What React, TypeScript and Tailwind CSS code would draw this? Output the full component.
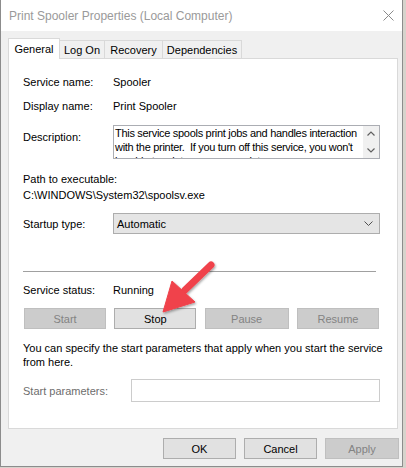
import React from 'react'

const font = { fontFamily: '"Liberation Sans", Arial, sans-serif' }

function Btn({ label, disabled, w = 'w-[82px]' }: { label: string; disabled?: boolean; w?: string }) {
  return (
    <div
      className={`${w} h-[21px] flex items-center justify-center border ${
        disabled ? 'bg-[#cccccc] border-[#bfbfbf] text-[#838383]' : 'bg-[#e1e1e1] border-[#adadad] text-black'
      }`}
    >
      {label}
    </div>
  )
}

function Row({ label, children, className = '' }: { label: string; children?: React.ReactNode; className?: string }) {
  return (
    <div className={`flex items-center h-4 ${className}`}>
      <div className="w-[90px]">{label}</div>
      <div>{children}</div>
    </div>
  )
}

export default function App() {
  return (
    <div className="w-[406px] h-[468px] bg-[#d6d3cc] text-[11px] leading-4 text-black overflow-hidden" style={font}>
      <div className="relative w-[403px] h-[467px] bg-[#f0f0f0] border-l border-r border-b border-[#8c8c8c] flex flex-col">
        {/* Title bar */}
        <div className="h-[31px] bg-white flex items-center justify-between pl-[8px] pr-[8px] shrink-0">
          <span className="text-[12px] text-[#9a9a9a]">Print Spooler Properties (Local Computer)</span>
          <svg width="11" height="11" viewBox="0 0 11 11">
            <path d="M0.5 0.5 L10.5 10.5 M10.5 0.5 L0.5 10.5" stroke="#8a8a8a" strokeWidth="1" />
          </svg>
        </div>

        {/* Tabs */}
        <div className="flex items-end h-[20px] mt-[7px] pl-[7px] shrink-0">
          <div className="h-[21px] w-[52px] bg-white border border-b-0 border-[#d9d9d9] flex items-start justify-center pt-[2px] relative z-10 mb-[-1px]">
            General
          </div>
          <div className="h-[18px] w-[45px] bg-[#f0f0f0] border border-l-0 border-b-0 border-[#d9d9d9] flex items-center justify-center">
            Log On
          </div>
          <div className="h-[18px] w-[58px] bg-[#f0f0f0] border border-l-0 border-b-0 border-[#d9d9d9] flex items-center justify-center">
            Recovery
          </div>
          <div className="h-[18px] w-[79px] bg-[#f0f0f0] border border-l-0 border-b-0 border-[#d9d9d9] flex items-center justify-center">
            Dependencies
          </div>
        </div>

        {/* Panel */}
        <div className="ml-[7px] w-[390px] h-[371px] bg-white border border-[#d9d9d9] pl-[14px] pt-[15px] flex flex-col shrink-0">
          <Row label="Service name:">Spooler</Row>
          <Row label="Display name:" className="mt-[8px]">Print Spooler</Row>

          <div className="flex mt-[11px] h-[34px]">
            <div className="w-[90px] pt-[4px]">Description:</div>
            <div className="w-[267px] h-[34px] border border-[#abadb3] flex">
              <div className="flex-1 overflow-hidden pl-[1px] leading-[14px] whitespace-nowrap tracking-[-0.3px]">
                This service spools print jobs and handles interaction
                <br />
                with the printer.&nbsp; If you turn off this service, you won't
                <br />
                be able to print or see your printers.
              </div>
              <div className="w-[16px] bg-[#f0f0f0] flex flex-col items-center justify-between py-[5px]">
                <svg width="8" height="5" viewBox="0 0 8 5">
                  <path d="M0.5 4.5 L4 1 L7.5 4.5" stroke="#606060" strokeWidth="1.2" fill="none" />
                </svg>
                <svg width="8" height="5" viewBox="0 0 8 5">
                  <path d="M0.5 0.5 L4 4 L7.5 0.5" stroke="#606060" strokeWidth="1.2" fill="none" />
                </svg>
              </div>
            </div>
          </div>

          <div className="mt-[12px] h-4 flex items-center">Path to executable:</div>
          <div className="h-4 flex items-center">C:\WINDOWS\System32\spoolsv.exe</div>

          <div className="flex items-center mt-[10px] h-[21px]">
            <div className="w-[90px]">Startup type:</div>
            <div className="w-[267px] h-[21px] bg-[#e5e5e5] border border-[#adadad] flex items-center justify-between pl-[3px] pr-[6px]">
              <span>Automatic</span>
              <svg width="9" height="5" viewBox="0 0 9 5">
                <path d="M0.5 0.5 L4.5 4.5 L8.5 0.5" stroke="#505050" strokeWidth="1" fill="none" />
              </svg>
            </div>
          </div>

          <div className="mt-[37px] w-[353px] h-px bg-[#a0a0a0]" />

          <Row label="Service status:" className="mt-[10px]">Running</Row>

          <div className="mt-[10px] w-[356px] flex justify-between pl-[1px]">
            <Btn label="Start" disabled />
            <Btn label="Stop" />
            <Btn label="Pause" disabled w="w-[84px]" />
            <Btn label="Resume" disabled />
          </div>

          <div className="mt-[12px] leading-[14px] w-[360px]">
            You can specify the start parameters that apply when you start the service
            <br />
            from here.
          </div>

          <div className="flex items-center mt-[10px] h-[23px]">
            <div className="w-[108px] text-[#6d6d6d]">Start parameters:</div>
            <div className="w-[249px] h-[23px] bg-white border border-[#cccccc]" />
          </div>
        </div>

        {/* Dialog buttons */}
        <div className="flex mt-[9px] pl-[162px] gap-[8px] shrink-0">
          <Btn label="OK" w="w-[73px]" />
          <Btn label="Cancel" w="w-[73px]" />
          <Btn label="Apply" disabled w="w-[74px]" />
        </div>

        {/* Callout arrow */}
        <svg className="absolute left-0 top-0 pointer-events-none" width="403" height="467" viewBox="0 0 403 467">
          <defs>
            <filter id="sh" x="-20%" y="-20%" width="140%" height="140%">
              <feDropShadow dx="1" dy="1.5" stdDeviation="1.2" floodColor="#000" floodOpacity="0.35" />
            </filter>
          </defs>
          <g filter="url(#sh)" fill="#f0424b" stroke="#f0424b">
            <line x1="210" y1="265" x2="184" y2="290" strokeWidth="7" strokeLinecap="round" />
            <polygon points="162,312 171,281 194,302" strokeWidth="1" strokeLinejoin="round" />
          </g>
        </svg>
      </div>
    </div>
  )
}
